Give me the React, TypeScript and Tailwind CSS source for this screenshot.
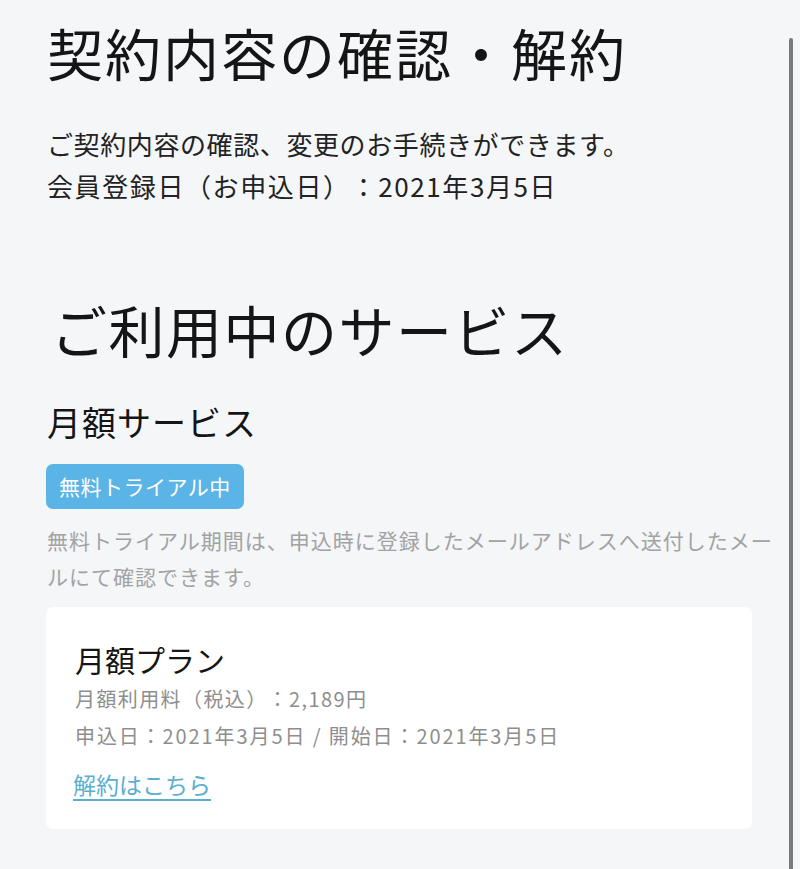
import React from "react";

export default function App() {
  const font = { fontFamily: '"Noto Sans CJK JP", "Noto Sans", sans-serif' };
  return (
    <div
      className="relative min-h-[869px] w-[800px] overflow-hidden bg-[#f4f6f8] text-[#151515] [text-spacing-trim:space-all]"
      style={font}
    >
      <div className="flex flex-col pl-[47px] pr-[48px] pb-[39px]">
        <h1 className="mt-[20px] text-[56px] leading-[64px] font-normal tracking-[2px]">
          契約内容の確認・解約
        </h1>
        <div className="mt-[39px] flex flex-col text-[26px] leading-[42px] text-[#222]">
          <p className="tracking-[0.6px]">ご契約内容の確認、変更のお手続きができます。</p>
          <p className="tracking-[1.6px]">会員登録日（お申込日）：2021年3月5日</p>
        </div>
        <h2 className="mt-[90px] pl-[4px] text-[56px] leading-[64px] font-normal tracking-[1.5px]">
          ご利用中のサービス
        </h2>
        <h3 className="mt-[39px] text-[34px] leading-[44px] font-normal tracking-[1px]">
          月額サービス
        </h3>
        <div className="mt-[20px] flex">
          <span className="-ml-[1px] flex h-[45px] items-center rounded-[7px] bg-[#5ab4e6] px-[13px] text-[21px] tracking-[0.5px] text-white">
            無料トライアル中
          </span>
        </div>
        <p className="mt-[13px] w-[735px] text-[21px] leading-[36px] tracking-[1px] text-[#a3a3a3]">
          無料トライアル期間は、申込時に登録したメールアドレスへ送付したメールにて確認できます。
        </p>
        <div className="mt-[13px] -ml-[1px] flex flex-col rounded-[7px] bg-white pl-[29px] pr-[24px] pt-[32px] pb-[27px]">
          <h4 className="text-[30px] leading-[40px] font-normal">月額プラン</h4>
          <div className="mt-[1px] flex flex-col text-[20px] leading-[37px] text-[#8e8e8e]">
            <p className="tracking-[1.4px]">月額利用料（税込）：2,189円</p>
            <p className="tracking-[1.9px]">申込日：2021年3月5日 / 開始日：2021年3月5日</p>
          </div>
          <div className="mt-[12px] flex">
            <a
              href="#"
              className="-ml-[2px] text-[23px] leading-[36px] text-[#5aaecf] underline underline-offset-[5px] decoration-[1.5px]"
            >
              解約はこちら
            </a>
          </div>
        </div>
      </div>
      <div className="absolute right-[7px] top-[38px] bottom-0 w-[4px] rounded-t-full bg-[#7a7a7a]" />
    </div>
  );
}
